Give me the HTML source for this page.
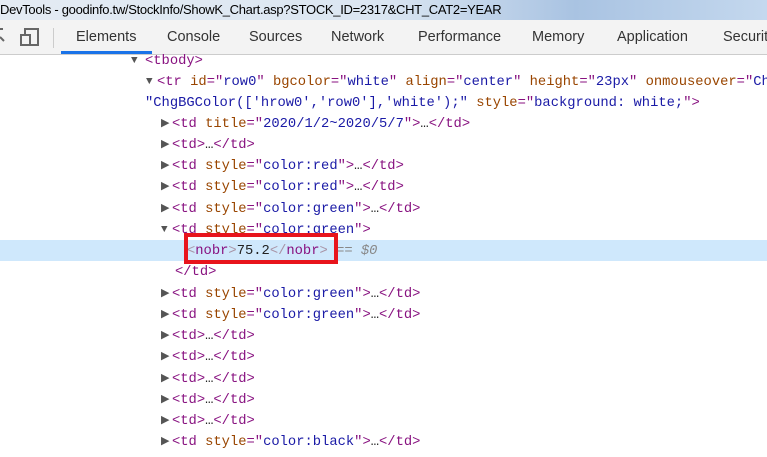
<!DOCTYPE html>
<html><head><style>
body{margin:0;width:767px;height:457px;overflow:hidden;background:#fff;position:relative;font-family:"Liberation Sans",sans-serif}
#title{position:absolute;left:0;top:0;width:767px;height:20px;background:linear-gradient(90deg,#e4ebf3 0%,#dbe6f2 50%,#a9c3e2 75%,#c4d8ee 100%)}
#title span{position:absolute;left:0;top:0;font-size:13px;line-height:20px;color:#000;white-space:nowrap;letter-spacing:-0.3px}
#tabs{position:absolute;left:0;top:20px;width:767px;height:34px;background:#f3f3f3;border-bottom:1px solid #ccc}
.tab{position:absolute;top:9px;font-size:14.5px;color:#333;white-space:nowrap}
#ul{position:absolute;left:61px;top:31px;width:91px;height:3px;background:#1a73e8}
.code{position:absolute;left:0;font-family:"Liberation Mono",monospace;font-size:13.8px;white-space:pre;line-height:21px;height:21px;width:767px}
.code span.x{position:absolute;top:1px}
.t{color:#881280}.a{color:#994500}.v{color:#1a1aa6}.b{color:#a894a6}.k{color:#222}
.tri{position:absolute;top:1px;color:#555;font-size:11px}
</style></head><body>
<div id="title"><span>DevTools - goodinfo.tw/StockInfo/ShowK_Chart.asp?STOCK_ID=2317&amp;CHT_CAT2=YEAR</span></div>
<div id="tabs">
<svg style="position:absolute;left:0;top:6px" width="45" height="22"><path d="M0 3h3M0 11l4 4" stroke="#666" stroke-width="2" fill="none"/><rect x="21" y="9" width="9" height="10" fill="none" stroke="#666" stroke-width="2"/><path d="M25 9V3h13v16h-8" fill="none" stroke="#666" stroke-width="2"/></svg>
<div style="position:absolute;left:53px;top:8px;width:1px;height:20px;background:#ccc"></div>
<span class="tab" style="left:76px">Elements</span>
<span class="tab" style="left:167px">Console</span>
<span class="tab" style="left:249px">Sources</span>
<span class="tab" style="left:331px">Network</span>
<span class="tab" style="left:418px">Performance</span>
<span class="tab" style="left:532px">Memory</span>
<span class="tab" style="left:617px">Application</span>
<span class="tab" style="left:723px">Securit</span>
<div id="ul"></div>
</div>
<div class="code" style="top:50px"><span class="tri" style="left:131px">▼</span><span class="x" style="left:145px"><span class="t">&lt;tbody&gt;</span></span></div>
<div class="code" style="top:71px"><span class="tri" style="left:146px">▼</span><span class="x" style="left:157px"><span class="t">&lt;tr </span><span class="a">id</span><span class="t">="</span><span class="v">row0</span><span class="t">" </span><span class="a">bgcolor</span><span class="t">="</span><span class="v">white</span><span class="t">" </span><span class="a">align</span><span class="t">="</span><span class="v">center</span><span class="t">" </span><span class="a">height</span><span class="t">="</span><span class="v">23px</span><span class="t">" </span><span class="a">onmouseover</span><span class="t">="</span><span class="v">Ch</span></span></div>
<div class="code" style="top:92px"><span class="x" style="left:145px"><span class="v">"ChgBGColor(['hrow0','row0'],'white');"</span> <span class="a">style</span><span class="t">="</span><span class="v">background: white;</span><span class="t">"&gt;</span></span></div>
<div class="code" style="top:113px"><span class="tri" style="left:161px">▶</span><span class="x" style="left:172px"><span class="t">&lt;td </span><span class="a">title</span><span class="t">="</span><span class="v">2020/1/2~2020/5/7</span><span class="t">"&gt;</span><span class="k">…</span><span class="t">&lt;/td&gt;</span></span></div>
<div class="code" style="top:134px"><span class="tri" style="left:161px">▶</span><span class="x" style="left:172px"><span class="t">&lt;td&gt;</span><span class="k">…</span><span class="t">&lt;/td&gt;</span></span></div>
<div class="code" style="top:155px"><span class="tri" style="left:161px">▶</span><span class="x" style="left:172px"><span class="t">&lt;td </span><span class="a">style</span><span class="t">="</span><span class="v">color:red</span><span class="t">"&gt;</span><span class="k">…</span><span class="t">&lt;/td&gt;</span></span></div>
<div class="code" style="top:176px"><span class="tri" style="left:161px">▶</span><span class="x" style="left:172px"><span class="t">&lt;td </span><span class="a">style</span><span class="t">="</span><span class="v">color:red</span><span class="t">"&gt;</span><span class="k">…</span><span class="t">&lt;/td&gt;</span></span></div>
<div class="code" style="top:198px"><span class="tri" style="left:161px">▶</span><span class="x" style="left:172px"><span class="t">&lt;td </span><span class="a">style</span><span class="t">="</span><span class="v">color:green</span><span class="t">"&gt;</span><span class="k">…</span><span class="t">&lt;/td&gt;</span></span></div>
<div class="code" style="top:219px"><span class="tri" style="left:161px">▼</span><span class="x" style="left:172px"><span class="t">&lt;td </span><span class="a">style</span><span class="t">="</span><span class="v">color:green</span><span class="t">"&gt;</span></span></div>
<div class="code" style="top:240px;background:#cfe8fc"><span class="x" style="left:187px"><span class="b">&lt;</span><span class="t">nobr</span><span class="b">&gt;</span><span class="k">75.2</span><span class="b">&lt;/</span><span class="t">nobr</span><span class="b">&gt;</span> <span style="color:#888">==</span> <span style="color:#888;font-style:italic">$0</span></span></div>
<div class="code" style="top:261px"><span class="x" style="left:175px"><span class="t">&lt;/td&gt;</span></span></div>
<div class="code" style="top:283px"><span class="tri" style="left:161px">▶</span><span class="x" style="left:172px"><span class="t">&lt;td </span><span class="a">style</span><span class="t">="</span><span class="v">color:green</span><span class="t">"&gt;</span><span class="k">…</span><span class="t">&lt;/td&gt;</span></span></div>
<div class="code" style="top:304px"><span class="tri" style="left:161px">▶</span><span class="x" style="left:172px"><span class="t">&lt;td </span><span class="a">style</span><span class="t">="</span><span class="v">color:green</span><span class="t">"&gt;</span><span class="k">…</span><span class="t">&lt;/td&gt;</span></span></div>
<div class="code" style="top:325px"><span class="tri" style="left:161px">▶</span><span class="x" style="left:172px"><span class="t">&lt;td&gt;</span><span class="k">…</span><span class="t">&lt;/td&gt;</span></span></div>
<div class="code" style="top:346px"><span class="tri" style="left:161px">▶</span><span class="x" style="left:172px"><span class="t">&lt;td&gt;</span><span class="k">…</span><span class="t">&lt;/td&gt;</span></span></div>
<div class="code" style="top:368px"><span class="tri" style="left:161px">▶</span><span class="x" style="left:172px"><span class="t">&lt;td&gt;</span><span class="k">…</span><span class="t">&lt;/td&gt;</span></span></div>
<div class="code" style="top:389px"><span class="tri" style="left:161px">▶</span><span class="x" style="left:172px"><span class="t">&lt;td&gt;</span><span class="k">…</span><span class="t">&lt;/td&gt;</span></span></div>
<div class="code" style="top:410px"><span class="tri" style="left:161px">▶</span><span class="x" style="left:172px"><span class="t">&lt;td&gt;</span><span class="k">…</span><span class="t">&lt;/td&gt;</span></span></div>
<div class="code" style="top:431px"><span class="tri" style="left:161px">▶</span><span class="x" style="left:172px"><span class="t">&lt;td </span><span class="a">style</span><span class="t">="</span><span class="v">color:black</span><span class="t">"&gt;</span><span class="k">…</span><span class="t">&lt;/td&gt;</span></span></div>
<div style="position:absolute;left:184px;top:233px;width:146px;height:23px;border:4px solid #e8141c"></div>
</body></html>
